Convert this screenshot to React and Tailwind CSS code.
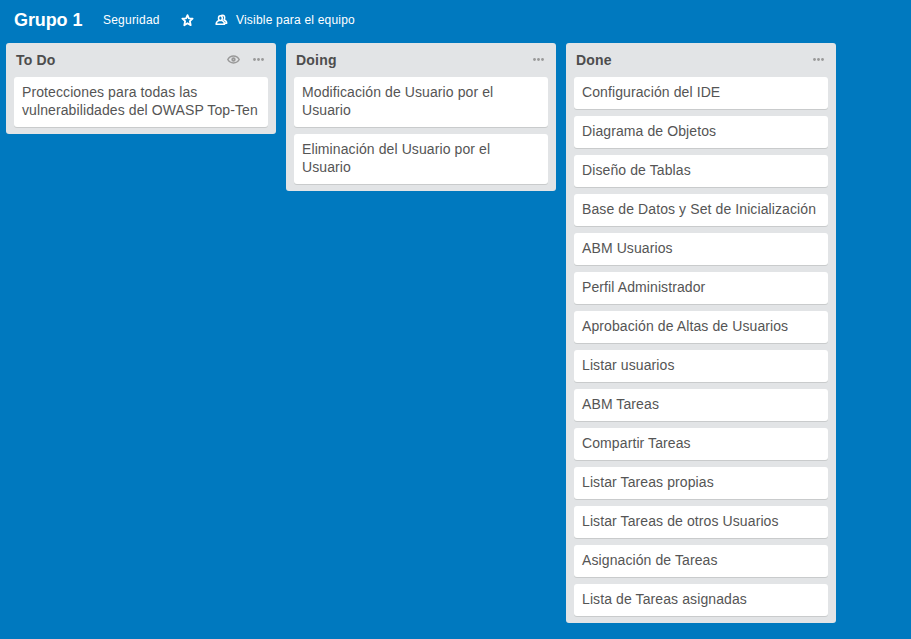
const lists = [
  {
    title: 'To Do',
    watched: true,
    cards: ['Protecciones para todas las vulnerabilidades del OWASP Top-Ten'],
  },
  {
    title: 'Doing',
    cards: ['Modificación de Usuario por el Usuario', 'Eliminación del Usuario por el Usuario'],
  },
  {
    title: 'Done',
    cards: [
      'Configuración del IDE',
      'Diagrama de Objetos',
      'Diseño de Tablas',
      'Base de Datos y Set de Inicialización',
      'ABM Usuarios',
      'Perfil Administrador',
      'Aprobación de Altas de Usuarios',
      'Listar usuarios',
      'ABM Tareas',
      'Compartir Tareas',
      'Listar Tareas propias',
      'Listar Tareas de otros Usuarios',
      'Asignación de Tareas',
      'Lista de Tareas asignadas',
    ],
  },
];

function StarIcon() {
  return (
    <svg className="h-[13px] w-[13px]" viewBox="0 0 13 13" fill="none" stroke="currentColor" strokeWidth="1.8" strokeLinejoin="round">
      <path d="M6.5 1.1 7.9 4.3l3.7.4-2.7 2.5.8 4-3.2-2-3.2 2 .8-4-2.7-2.5 3.7-.4z" />
    </svg>
  );
}

function TeamIcon() {
  return (
    <svg className="h-3 w-[13px]" viewBox="0 0 13 12" fill="none" stroke="currentColor" strokeLinejoin="round" strokeLinecap="round">
      <path strokeWidth="1.5" d="M6.4 1.5C7.900.7 9.700 1.600 9.700 3.400c0 1-.3 1.700-.7 2.400 1.800.7 2.700 1.700 2.700 3.500h-1.600" />
      <ellipse cx="5.400" cy="4.200" rx="1.900" ry="2.400" strokeWidth="1.500" />
      <path strokeWidth="1.500" d="M4.100 6.400C2.300 7.200 1.200 8.500 1.100 10.300h8.500C9.500 8.500 8.500 7.200 6.700 6.400" />
    </svg>
  );
}

function EyeIcon() {
  return (
    <svg className="h-[9px] w-[13px]" viewBox="0 0 13 9" fill="none" stroke="currentColor">
      <path strokeWidth="1.500" d="M.8 4.500C2 2.300 4 1.100 6.500 1.100s4.500 1.200 5.700 3.400C11 6.700 9 7.900 6.500 7.900S2 6.700.8 4.500z" />
      <circle cx="6.500" cy="4.500" r="1.300" strokeWidth="1.800" />
    </svg>
  );
}

function DotsIcon() {
  return (
    <svg className="h-[3px] w-[11px]" viewBox="0 0 11 3" fill="currentColor">
      <circle cx="1.500" cy="1.500" r="1.400" />
      <circle cx="5.500" cy="1.500" r="1.400" />
      <circle cx="9.500" cy="1.500" r="1.400" />
    </svg>
  );
}

function List({ title, watched, cards }) {
  return (
    <section className="w-[270px] shrink-0 rounded-[3px] bg-[#e2e4e6] px-2 pb-[7px]">
      <header className="flex h-[34px] items-center justify-between pr-1 pl-0.5">
        <h2 className="text-[14px] leading-[18px] font-bold tracking-[0.2px] text-[#4d4d4d]">{title}</h2>
        <div className="flex items-center gap-[13px] pb-px text-[#999999]">
          {watched && <EyeIcon />}
          <DotsIcon />
        </div>
      </header>
      <div className="flex flex-col gap-[7px]">
        {cards.map((card) => (
          <article
            key={card}
            className="rounded-[3px] bg-white px-2 pt-1.5 pb-2 text-[14px] leading-[18px] tracking-[0.1px] text-[#555555] shadow-[0_1px_0_#c9cbcc]"
          >
            {card}
          </article>
        ))}
      </div>
    </section>
  );
}

export default function App() {
  return (
    <div className="h-[639px] w-[911px] overflow-hidden bg-[#0079bf] font-['Liberation_Sans',Arial,sans-serif]">
      <nav className="flex h-[43px] items-center pb-[3px] pl-[14px] text-white">
        <h1 className="w-[89px] text-[18px] leading-5 font-bold tracking-[-0.1px]">Grupo 1</h1>
        <span className="w-[78px] text-[12px] tracking-[0.22px]">Seguridad</span>
        <span className="w-[34px]"><StarIcon /></span>
        <span className="flex items-center gap-2 text-[12px] tracking-[0.2px]">
          <TeamIcon />
          Visible para el equipo
        </span>
      </nav>
      <main className="flex items-start gap-2.5 pl-1.5">
        {lists.map((list) => (
          <List key={list.title} {...list} />
        ))}
      </main>
    </div>
  );
}
